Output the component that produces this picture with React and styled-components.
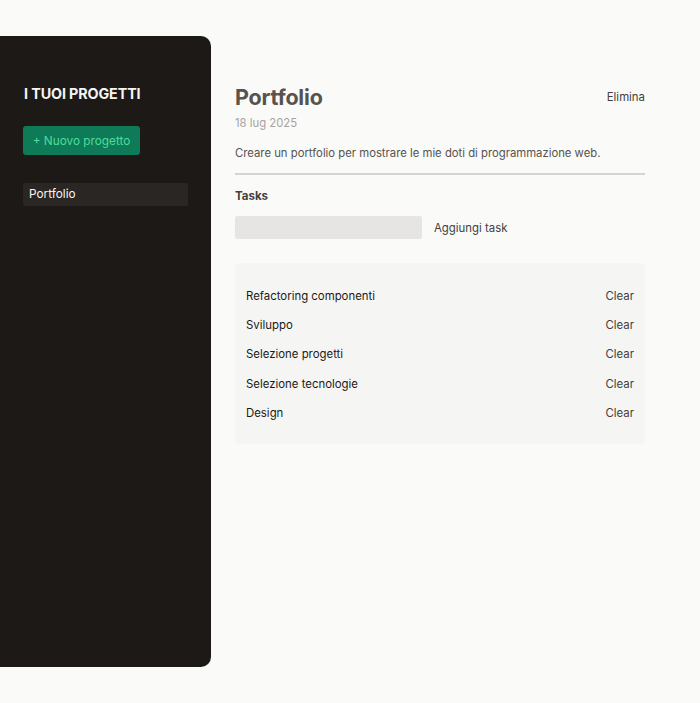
import React, { useState } from 'react'
import styled, { createGlobalStyle } from 'styled-components'

const GlobalStyle = createGlobalStyle`
  html, body {
    margin: 0;
    padding: 0;
    background: #fafaf9;
    font-family: Inter, "Noto Sans", "Liberation Sans", sans-serif;
  }
  * { box-sizing: border-box; }
`

const initialTasks = [
  'Refactoring componenti',
  'Sviluppo',
  'Selezione progetti',
  'Selezione tecnologie',
  'Design',
]

const App = () => {
  const [tasks, setTasks] = useState(initialTasks)
  const [text, setText] = useState('')

  return (
    <Main>
      <GlobalStyle />
      <Sidebar>
        <SideTitle>I tuoi progetti</SideTitle>
        <NewButton>+ Nuovo progetto</NewButton>
        <ProjectList>
          <li>
            <ProjectItem selected>Portfolio</ProjectItem>
          </li>
        </ProjectList>
      </Sidebar>

      <Content>
        <Header>
          <TitleRow>
            <Title>Portfolio</Title>
            <TextButton>Elimina</TextButton>
          </TitleRow>
          <DateText>18 lug 2025</DateText>
          <Description>Creare un portfolio per mostrare le mie doti di programmazione web.</Description>
        </Header>

        <Section>
          <SectionTitle>Tasks</SectionTitle>
          <AddRow>
            <TaskInput value={text} onChange={e => setText(e.target.value)} />
            <TextButton
              onClick={() => {
                if (!text.trim()) return
                setTasks([text, ...tasks])
                setText('')
              }}
            >
              Aggiungi task
            </TextButton>
          </AddRow>
          <TaskList>
            {tasks.map((t, i) => (
              <TaskRow key={t + i}>
                <span>{t}</span>
                <TextButton onClick={() => setTasks(tasks.filter((_, j) => j !== i))}>Clear</TextButton>
              </TaskRow>
            ))}
          </TaskList>
        </Section>
      </Content>
    </Main>
  )
}

export default App

const Main = styled.main`
  display: flex;
  gap: 24px;
  height: 703px;
  padding: 36px 0;
`

const Sidebar = styled.aside`
  width: 211px;
  flex-shrink: 0;
  background: #1c1917;
  border-radius: 0 10px 10px 0;
  padding: 48px 23px;
  color: #f5f5f4;
`

const SideTitle = styled.h2`
  margin: 0 0 22px 1px;
  font-size: 14.3px;
  line-height: 20px;
  font-weight: 700;
  text-transform: uppercase;
  color: #f5f5f4;
  letter-spacing: -0.1px;
`

const NewButton = styled.button`
  display: block;
  height: 29px;
  width: 117px;
  padding: 0;
  white-space: nowrap;
  border: none;
  border-radius: 3px;
  background: #0f7a57;
  color: #4ade9a;
  font-family: inherit;
  font-size: 11.8px;
  cursor: pointer;
`

const ProjectList = styled.ul`
  list-style: none;
  margin: 27px 0 0;
  padding: 0;
`

const ProjectItem = styled.button`
  width: 165px;
  height: 23px;
  text-align: left;
  padding: 0 6px;
  border: none;
  border-radius: 2px;
  background: ${p => (p.selected ? '#2a2624' : 'transparent')};
  color: ${p => (p.selected ? '#f5f5f4' : '#a8a29e')};
  font-family: inherit;
  font-size: 11.8px;
  cursor: pointer;
`

const Content = styled.div`
  width: 410px;
  padding-top: 47px;
`

const Header = styled.header`
  padding-bottom: 11px;
  border-bottom: 2px solid #d6d3d1;
  margin-bottom: 12px;
`

const TitleRow = styled.div`
  display: flex;
  align-items: center;
  justify-content: space-between;
`

const Title = styled.h1`
  margin: 0;
  font-size: 21.5px;
  line-height: 28px;
  font-weight: 700;
  color: #57534e;
  letter-spacing: -0.2px;
`

const TextButton = styled.button`
  background: none;
  border: none;
  padding: 0;
  font-family: inherit;
  font-size: 11.4px;
  color: #44403c;
  cursor: pointer;
`

const DateText = styled.p`
  margin: 5px 0 14px;
  font-size: 11.3px;
  color: #a8a29e;
`

const Description = styled.p`
  margin: 0;
  font-size: 11.3px;
  line-height: 18px;
  color: #57534e;
`

const Section = styled.section``

const SectionTitle = styled.h3`
  margin: 0 0 11px;
  font-size: 11.5px;
  line-height: 18px;
  font-weight: 700;
  color: #44403c;
`

const AddRow = styled.div`
  display: flex;
  align-items: center;
  gap: 12px;
`

const TaskInput = styled.input`
  width: 187px;
  height: 23px;
  border: none;
  border-radius: 2px;
  background: #e7e5e4;
  padding: 0 8px;
  font-family: inherit;
  outline: none;
`

const TaskList = styled.ul`
  list-style: none;
  margin: 24px 0 0;
  padding: 18px 11px 17px;
  background: #f5f5f4;
  border-radius: 5px;
`

const TaskRow = styled.li`
  display: flex;
  justify-content: space-between;
  align-items: center;
  height: 29.3px;
  font-size: 11.4px;
  color: #1c1917;
`
